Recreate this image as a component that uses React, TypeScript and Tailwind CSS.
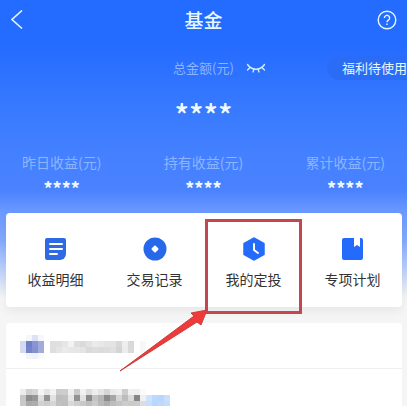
import React, { useState } from "react";

const stats = ["昨日收益(元)", "持有收益(元)", "累计收益(元)"];

const entries = [
  { label: "收益明细", icon: <DetailIcon /> },
  { label: "交易记录", icon: <RecordIcon /> },
  { label: "我的定投", icon: <PlanIcon />, marked: true },
  { label: "专项计划", icon: <BookIcon /> },
];

// censored text, one colour per 6px block, "" is left blank
const firstRow = [
  ["", "#f6f7fd", "#dde1f5", "#f6f7fd"],
  ["#d3d9ef", "#6f80c6", "#8795d4", "#a0abda", "", "#dfdfdf", "#e0e0e0", "#e6e6e6", "#f3f3f3", "#dedede", "#dadada", "#e2e2e2", "#ebebeb", "#e8e8e8", "#e4e4e4", "#e3e3e3", "#d8d8d8", "#eeeeee", "#d9d9d9", "", "#f7f7f7"],
  ["#d5daef", "#7584c8", "#8491d1", "#a3acd9", "", "#dedede", "#e4e4e4", "#ebebeb", "#e7e7e7", "#e6e6e6", "#e4e4e4", "#dadada", "#dddddd", "#dbdbdb", "#dddddd", "#e0e0e0", "#d4d4d4", "#ececec", "#dadada", "", "#f8f8f8"],
  ["", "#f3f5fc", "#f0f2fb", "#f8f9fd"],
];
const secondRow = [
  ["#ececec", "#cfcfcf", "#d6d6d6", "#f5f5f5", "#e4e4e4", "#f2f2f2", "#cbcbcb", "#cdcdcd", "#eeeeee", "#cacaca", "#f1f1f1", "#dcdcdc", "#eeeeee", "#e4e4e4", "#d5d5d5", "#e9e9e9", "#eeeeee", "#cccccc", "#f0f0f0", "#eeeeee", "#fafafa"],
  ["#c6c6c6", "#8d8d8d", "#979797", "#dedede", "#949494", "#e2e2e2", "#bdbdbd", "#c0c0c0", "#e5e5e5", "#929292", "#e2e2e2", "#8b8b8b", "#c4c4c4", "#b5b5b5", "#8b8b8b", "#a7a7a7", "#d5d5d5", "#bcbcbc", "#d9d9d9", "#858585", "#f1f1f1", "#cfe2fb", "#bcd8fd", "#b7d5fd", "#c9dffd"],
  ["#c9c9c9", "#a9a9a9", "#adadad", "#d1d1d1", "#cccccc", "#d6d6d6", "#c1c1c1", "#bebebe", "#d9d9d9", "#cfcfcf", "#c8c8c8", "#bebebe", "#cbcbcb", "#b9b9b9", "#aeaeae", "#bcbcbc", "#c3c3c3", "#cccccc", "#c9c9c9", "#cbcbcb", "#d9dde6", "#c8defb", "#b9d6fd", "#bddafd", "#c5ddfd"],
];

function Mosaic({ rows, height }: { rows: string[][]; height: number }) {
  return (
    <svg width="150" height={height} shapeRendering="crispEdges" aria-hidden="true">
      {rows.map((row, y) =>
        row.map((color, x) =>
          color ? <rect key={`${x}-${y}`} x={x * 6} y={y * 6} width="6" height="6" fill={color} /> : null
        )
      )}
    </svg>
  );
}

function DetailIcon() {
  return (
    <svg width="24" height="24" viewBox="0 0 24 24">
      <path d="M3 1h17a2 2 0 0 1 2 2v14a6 6 0 0 1-6 6H3a2 2 0 0 1-2-2V3a2 2 0 0 1 2-2z" fill="#2f69e4" />
      <path d="M6 7h12M6 12h12M6 17h7" stroke="#fff" strokeWidth="2" strokeLinecap="round" />
    </svg>
  );
}

function RecordIcon() {
  return (
    <svg width="24" height="24" viewBox="0 0 24 24">
      <circle cx="12" cy="12" r="11.5" fill="#2767ea" />
      <path d="M12 9.5L14.5 12L12 14.5L9.5 12z" fill="#fff" stroke="#fff" strokeWidth="2" strokeLinejoin="round" />
    </svg>
  );
}

function PlanIcon() {
  return (
    <svg width="24" height="24" viewBox="0 0 24 24">
      <path d="M12 1.5L21.5 6.8V17.2L12 22.5L2.5 17.2V6.8z" fill="#246bfb" stroke="#246bfb" strokeWidth="2.5" strokeLinejoin="round" />
      <path d="M12 7v6l4 3" fill="none" stroke="#fff" strokeWidth="2" strokeLinecap="round" strokeLinejoin="round" />
    </svg>
  );
}

function BookIcon() {
  return (
    <svg width="24" height="24" viewBox="0 0 24 24">
      <path d="M3 1h10v9l3-2l3 2V1h1a2 2 0 0 1 2 2v18a2 2 0 0 1-2 2H3a2 2 0 0 1-2-2V3a2 2 0 0 1 2-2z" fill="#246bfb" />
    </svg>
  );
}

function ClosedEye() {
  return (
    <svg width="20" height="12" viewBox="0 0 20 12" fill="none" stroke="#d5f1ff" strokeWidth="1.3" strokeLinecap="round">
      <path d="M1.5 2.5C6 8.8 14 8.800 18.5 2.500" />
      <path d="M4 5.500L1.500 8M8 7L7 10M12 7L13 10M16 5.500L18.500 8" />
    </svg>
  );
}

function App() {
  const [active, setActive] = useState("");

  return (
    <main className={'flex flex-col min-h-screen overflow-hidden bg-[#f5f5f5] font-["Noto_Sans_CJK_SC",sans-serif]'}>
      <div className="bg-[linear-gradient(to_bottom,#246bff_0px,#246bff_44px,#387aff_110px,#4380ff_150px,#4a82ff_190px,#6b99ff_212px,#83a9ff_240px,#f5f5f5_298px)]">
        <header className="flex items-center justify-between h-10 px-[10px] text-[#e6f8ff]">
          <button type="button" aria-label="返回" className="w-5 h-5">
            <svg width="20" height="20" viewBox="0 0 20 20" fill="none" stroke="currentColor" strokeWidth="1.6">
              <path d="M12 0.5L2 9.5L12 18.5" />
            </svg>
          </button>
          <h1 className="text-[19px] leading-6 font-medium">基金</h1>
          <button type="button" aria-label="帮助" className="w-5 h-5">
            <svg width="20" height="20" viewBox="0 0 20 20" fill="none" stroke="currentColor" strokeWidth="1.4">
              <circle cx="10" cy="10" r="8.8" />
              <path d="M7.4 8a2.6 2.6 0 1 1 4.2 2c-1 .8-1.6 1.2-1.6 2.3" />
              <path d="M10 13.5v1.5" />
            </svg>
          </button>
        </header>

        <div className="grid grid-cols-[1fr_auto_1fr] items-center pt-4">
          <span></span>
          <span className="text-[13px] leading-6 text-[#8db5ff]">总金额(元)</span>
          <div className="flex items-center justify-between pl-3">
            <button type="button" aria-label="显示金额">
              <ClosedEye />
            </button>
            <button type="button" className="h-6 pl-[15px] rounded-l-full bg-[#2a6cf6] text-[13px] leading-6 text-[#e6f8ff] whitespace-nowrap">
              福利待使用
            </button>
          </div>
        </div>
        <p className="pt-5 text-3xl leading-7 font-medium text-center text-[#eefaff]">****</p>

        <dl className="flex justify-between px-[22px] pt-[22px] pb-[13px]">
          {stats.map((name) => (
            <div key={name} className="text-center">
              <dt className="text-sm leading-6 text-[#8db5ff]">{name}</dt>
              <dd className="mt-0.5 text-lg leading-6 font-bold text-[#eefaff]">****</dd>
            </div>
          ))}
        </dl>

        <nav className="grid grid-cols-4 ml-1.5 mr-[5px] rounded bg-white shadow-[0_4px_10px_rgba(0,0,0,0.06)]">
          {entries.map((item) => (
            <button
              key={item.label}
              type="button"
              aria-pressed={active === item.label}
              onClick={() => setActive(item.label)}
              className="relative flex flex-col items-center gap-1.5 pt-6 pb-4 text-sm leading-6 text-[#333]"
            >
              {item.icon}
              {item.label}
              {item.marked && (
                <>
                  <span className="absolute inset-x-px top-1.5 -bottom-[7px] border-3 border-[#c4474f]"></span>
                  <svg className="absolute top-24 right-full -mr-1 z-10" width="90" height="64" viewBox="0 0 90 64">
                    <path d="M89 1L73 4L76 7L2 62L79 13L83 16z" fill="#ee3a38" stroke="#c8403f" strokeWidth="1" strokeLinejoin="round" />
                  </svg>
                </>
              )}
            </button>
          ))}
        </nav>
      </div>

      <section className="flex flex-col flex-1 mt-4 ml-1.5 mr-[5px] rounded-t bg-white">
        <div className="h-[46px] px-[14px] pt-3 border-b border-[#eee]">
          <Mosaic rows={firstRow} height={24} />
        </div>
        <div className="px-[14px] pt-5">
          <Mosaic rows={secondRow} height={17} />
        </div>
      </section>
    </main>
  );
}

export default App;
